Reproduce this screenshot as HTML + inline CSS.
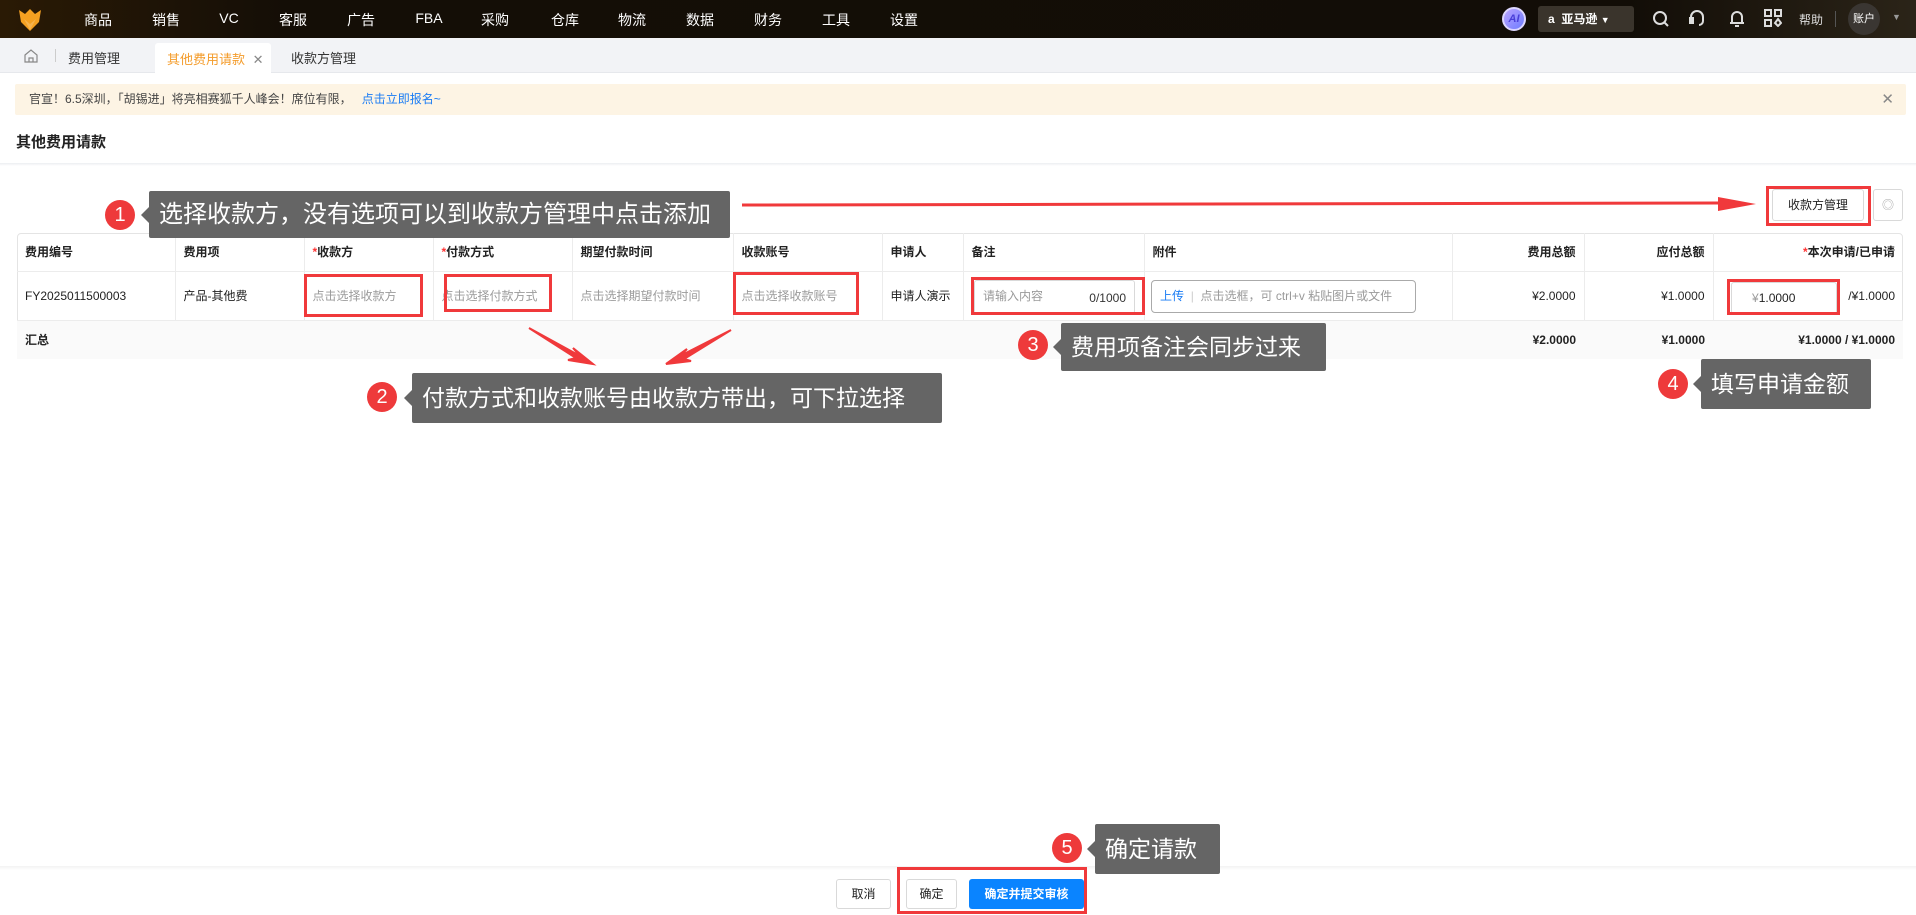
<!DOCTYPE html>
<html><head><meta charset="utf-8"><style>
*{box-sizing:border-box;margin:0;padding:0}
body{width:1916px;height:915px;position:relative;overflow:hidden;background:#fff;font-family:"Liberation Sans","Noto Sans CJK SC",sans-serif;font-size:13px;color:#222}
.a{position:absolute}
.nav{left:0;top:0;width:1916px;height:38px;background:linear-gradient(90deg,#2a1a05 0%,#140e06 15%,#120d07 85%,#2b2418 100%)}
.nav .m{position:absolute;top:10px;color:#fff;font-size:14px;transform:translateX(-50%)}
.tabs{left:0;top:38px;width:1916px;height:35px;background:#f2f3f6;border-bottom:1px solid #e6e8ec}
.notice{left:15px;top:84px;width:1891px;height:31px;background:#fdf4e4;border-radius:2px;font-size:12px;color:#444;line-height:31px;padding-left:14px}
table{border-collapse:collapse;position:absolute;left:17px;top:233px;width:1886px;table-layout:fixed;font-size:12px}
td,th{border-right:1px solid #ececec;border-bottom:1px solid #ececec;padding:0 8px;text-align:left;white-space:nowrap;overflow:visible}
th{height:38px;font-weight:bold}
td{height:49px}
tr.s td{height:39px;background:#fafafa;font-weight:bold;border:none}
.tw{position:absolute;left:17px;top:233px;width:1886px;height:126px;border:1px solid #e4e4e4;border-radius:4px}
.ph{color:#9a9a9a}
.r{text-align:right}
.red{position:absolute;border:3px solid #f0393b}
.circ{position:absolute;width:30px;height:30px;border-radius:50%;background:#ee3a3b;color:#fff;font-size:20px;text-align:center;line-height:30px}
.co{position:absolute;background:#656565;color:#fff;font-size:23px;padding-left:10px;border-radius:2px;white-space:nowrap}
.co:before{content:"";position:absolute;left:-8px;top:50%;margin-top:-8px;border:8px solid transparent;border-left:none;border-right-color:#656565}
.btn{position:absolute;border:1px solid #d9d9d9;border-radius:3px;background:#fff;text-align:center;font-size:12px}
</style></head><body>
<div class="a nav">
<svg class="a" style="left:18px;top:8px" width="24" height="24" viewBox="0 0 24 24"><path d="M1 2 L7 6 L12 1 L17 6 L23 2 L21 14 L12 23 L3 14Z" fill="#f4a021"/><path d="M6 11 L12 16 L18 11 L12 22Z" fill="#fff3"/></svg>
<span class="m" style="left:98px">商品</span><span class="m" style="left:166px">销售</span><span class="m" style="left:229px">VC</span><span class="m" style="left:293px">客服</span><span class="m" style="left:361px">广告</span><span class="m" style="left:429px">FBA</span><span class="m" style="left:495px">采购</span><span class="m" style="left:565px">仓库</span><span class="m" style="left:632px">物流</span><span class="m" style="left:700px">数据</span><span class="m" style="left:768px">财务</span><span class="m" style="left:836px">工具</span><span class="m" style="left:904px">设置</span>
<div class="a" style="left:1502px;top:7px;width:24px;height:24px;border-radius:50%;background:linear-gradient(135deg,#b9a4ff,#6e7cff);border:2px solid #dcd6ff;color:#4a3fd8;font-weight:bold;font-size:11px;text-align:center;line-height:20px;font-style:italic">AI</div>
<div class="a" style="left:1538px;top:6px;width:96px;height:26px;background:#3a342c;border-radius:3px;color:#fff;font-size:12px;font-weight:bold;line-height:26px;padding-left:10px">a&nbsp; 亚马逊 <span style="font-size:9px">▼</span></div>
<svg class="a" style="left:1652px;top:10px" width="18" height="18" viewBox="0 0 18 18" fill="none" stroke="#ddd" stroke-width="2"><circle cx="8" cy="8" r="6"/><path d="M12.5 12.5 L16 16"/></svg>
<svg class="a" style="left:1688px;top:9px" width="18" height="20" viewBox="0 0 18 20" fill="none" stroke="#ddd" stroke-width="2"><path d="M3 11 V8 a6 6 0 0 1 12 0 V12 a4 4 0 0 1 -4 4"/><rect x="2" y="9" width="3" height="5" fill="#ddd"/></svg>
<svg class="a" style="left:1728px;top:9px" width="18" height="20" viewBox="0 0 18 20" fill="none" stroke="#ddd" stroke-width="2"><path d="M4 14 V8 a5 5 0 0 1 10 0 V14 Z M2 14 H16 M7 17 H11"/></svg>
<svg class="a" style="left:1764px;top:9px" width="18" height="18" viewBox="0 0 18 18" fill="none" stroke="#ddd" stroke-width="2"><rect x="1" y="1" width="6" height="6"/><rect x="11" y="1" width="6" height="6"/><rect x="1" y="11" width="6" height="6"/><path d="M14 10 L17 14 L14 17 L11 14Z"/></svg>
<span class="a" style="left:1799px;top:11px;color:#ddd;font-size:12px">帮助</span>
<div class="a" style="left:1835px;top:11px;width:1px;height:16px;background:#555"></div>
<div class="a" style="left:1848px;top:3px;width:32px;height:32px;border-radius:50%;background:#3a3632;color:#fff;font-size:11px;text-align:center;line-height:32px">账户</div>
<span class="a" style="left:1892px;top:12px;color:#999;font-size:9px">▼</span>
</div>
<div class="a tabs">
<svg class="a" style="left:24px;top:11px" width="14" height="14" viewBox="0 0 14 14" fill="none" stroke="#888" stroke-width="1.2"><path d="M1 6 L7 1 L13 6 V13 H1Z M5 13 V9 H9 V13"/></svg>
<div class="a" style="left:55px;top:11px;width:1px;height:13px;background:#ccc"></div>
<span class="a" style="left:68px;top:10px;color:#333">费用管理</span>
<div class="a" style="left:155px;top:5px;width:116px;height:31px;background:#fff;border-radius:3px 3px 0 0;color:#f49c2b;padding:6px 0 0 12px">其他费用请款 <span style="color:#888;margin-left:4px">✕</span></div>
<span class="a" style="left:291px;top:10px;color:#333">收款方管理</span>
</div>
<div class="a notice">官宣！6.5深圳，「胡锡进」将亮相赛狐千人峰会！席位有限，&nbsp;&nbsp;&nbsp;<span style="color:#1a7cf4">点击立即报名~</span><span style="position:absolute;right:12px;color:#888;font-size:15px">✕</span></div>
<div class="a" style="left:16px;top:131px;font-size:15px;font-weight:bold;color:#222">其他费用请款</div>
<div class="a" style="left:0;top:163px;width:1916px;height:3px;background:linear-gradient(#eceef1,#fff)"></div>

<div class="btn" style="left:1772px;top:189px;width:92px;height:32px;line-height:30px">收款方管理</div>
<div class="btn" style="left:1873px;top:189px;width:30px;height:32px;line-height:30px;color:#aaa">◎</div>
<div class="red" style="left:1766px;top:186px;width:105px;height:40px"></div>

<div class="tw"></div>
<table>
<colgroup><col style="width:158px"><col style="width:129px"><col style="width:129px"><col style="width:139px"><col style="width:161px"><col style="width:149px"><col style="width:81px"><col style="width:181px"><col style="width:308px"><col style="width:132px"><col style="width:129px"><col style="width:190px"></colgroup>
<tr><th>费用编号</th><th>费用项</th><th><span style="color:#f33">*</span>收款方</th><th><span style="color:#f33">*</span>付款方式</th><th>期望付款时间</th><th>收款账号</th><th>申请人</th><th>备注</th><th>附件</th><th class="r">费用总额</th><th class="r">应付总额</th><th class="r" style="border-right:none"><span style="color:#f33">*</span>本次申请/已申请</th></tr>
<tr><td>FY2025011500003</td><td>产品-其他费</td><td class="ph">点击选择收款方</td><td class="ph">点击选择付款方式</td><td class="ph">点击选择期望付款时间</td><td class="ph">点击选择收款账号</td><td>申请人演示</td><td></td><td></td><td class="r">¥2.0000</td><td class="r">¥1.0000</td><td class="r" style="border-right:none">/¥1.0000</td></tr>
<tr class="s"><td>汇总</td><td></td><td></td><td></td><td></td><td></td><td></td><td></td><td></td><td class="r">¥2.0000</td><td class="r">¥1.0000</td><td class="r">¥1.0000 / ¥1.0000</td></tr>
</table>
<div class="a" style="left:974px;top:280px;width:161px;height:34px;border:1px solid #d9d9d9;border-radius:3px;font-size:12px;padding:6px 8px"><span class="ph">请输入内容</span><span style="position:absolute;right:8px;top:10px;color:#333">0/1000</span></div>
<div class="a" style="left:1151px;top:280px;width:265px;height:33px;border:1px solid #aaa;border-radius:4px;font-size:12px;line-height:31px;padding-left:8px"><span style="color:#1a7cf4">上传</span> <span style="color:#ccc">&nbsp;|&nbsp;</span> <span class="ph">点击选框，可 ctrl+v 粘贴图片或文件</span></div>
<div class="a" style="left:1731px;top:282px;width:106px;height:32px;border:1px solid #d9d9d9;border-radius:3px;font-size:12px;line-height:30px;padding-left:20px"><span class="ph">¥</span>1.0000</div>

<div class="red" style="left:304px;top:274px;width:119px;height:43px"></div>
<div class="red" style="left:444px;top:274px;width:108px;height:38px"></div>
<div class="red" style="left:733px;top:272px;width:126px;height:43px"></div>
<div class="red" style="left:971px;top:277px;width:174px;height:38px"></div>
<div class="red" style="left:1727px;top:279px;width:113px;height:36px"></div>

<div class="a" style="left:0;top:866px;width:1916px;height:4px;background:linear-gradient(#f3f3f3,#fff)"></div>
<div class="btn" style="left:836px;top:879px;width:55px;height:30px;line-height:28px">取消</div>
<div class="btn" style="left:906px;top:879px;width:51px;height:30px;line-height:28px">确定</div>
<div class="btn" style="left:969px;top:879px;width:115px;height:30px;line-height:30px;background:#0a84ff;border:none;color:#fff;font-weight:bold">确定并提交审核</div>
<div class="red" style="left:897px;top:867px;width:190px;height:47px"></div>

<svg class="a" style="left:0;top:0" width="1916" height="915">
<path d="M742 205 L1720 203" stroke="#f0393b" stroke-width="3"/>
<path d="M1718 197 L1756 204 L1718 211Z" fill="#f0393b"/>
<path d="M529 328 L580 356 L573 348 L593 364 L568 360 L576 358Z" fill="#f0393b" stroke="#f0393b" stroke-width="2"/>
<path d="M731 330 L680 356 L687 349 L666 364 L691 361 L684 359Z" fill="#f0393b" stroke="#f0393b" stroke-width="2"/>
</svg>

<div class="circ" style="left:105px;top:200px">1</div>
<div class="co" style="left:149px;top:191px;width:581px;height:47px;line-height:47px;font-size:24px">选择收款方，没有选项可以到收款方管理中点击添加</div>
<div class="circ" style="left:367px;top:382px">2</div>
<div class="co" style="left:412px;top:373px;width:530px;height:50px;line-height:50px">付款方式和收款账号由收款方带出，可下拉选择</div>
<div class="circ" style="left:1018px;top:330px">3</div>
<div class="co" style="left:1061px;top:323px;width:265px;height:48px;line-height:48px">费用项备注会同步过来</div>
<div class="circ" style="left:1658px;top:369px">4</div>
<div class="co" style="left:1701px;top:359px;width:170px;height:50px;line-height:50px">填写申请金额</div>
<div class="circ" style="left:1052px;top:833px">5</div>
<div class="co" style="left:1095px;top:824px;width:125px;height:50px;line-height:50px">确定请款</div>
</body></html>
